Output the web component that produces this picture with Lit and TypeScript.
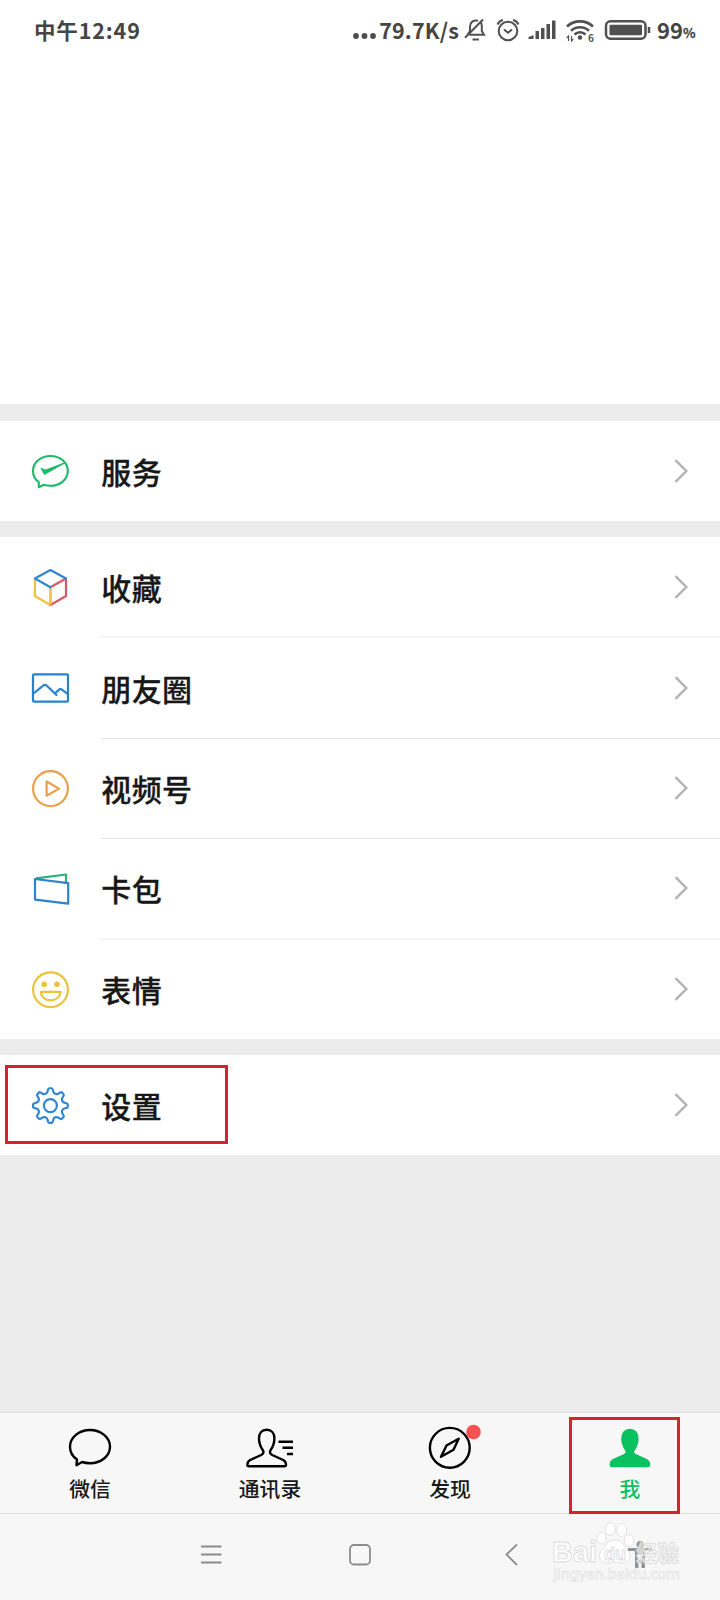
import { LitElement, html, css, svg } from "lit";
import { customElement, property } from "lit/decorators.js";

// Eight rounded teeth around a ring, joined by concave valleys.
function gearPath(): string {
  const at = (deg: number, r: number) => {
    const t = (deg * Math.PI) / 180;
    return `${(20.4 + r * Math.sin(t)).toFixed(2)} ${(20.6 - r * Math.cos(t)).toFixed(2)}`;
  };
  let d = `M${at(-12, 14.2)}`;
  for (let i = 0; i < 8; i++) {
    const a = i * 45;
    d += `L${at(a - 8.5, 16.2)}Q${at(a - 7, 17.4)} ${at(a - 4, 17.4)}L${at(a + 4, 17.4)}Q${at(a + 7, 17.4)} ${at(a + 8.5, 16.2)}L${at(a + 12, 14.2)}A3.3 3.3 0 0 0 ${at(a + 33, 14.2)}`;
  }
  return d + "z";
}

const icons: Record<string, unknown> = {
  service: svg`<g fill="none" stroke="#1aba69" stroke-width="2.100" stroke-linejoin="round" stroke-linecap="round"><path d="M8.800 31.200C5 28.500 3 24.500 3 20C3 11.500 10.700 5 20.400 5S37.800 11.500 37.800 20S30 34.800 20.400 34.800C18 34.800 15.800 34.500 13.700 33.800L8.800 36.200z"/><path d="M11.200 17.500L14.500 23.400 35.500 11.500 15.700 19z" fill="#1aba69" stroke-width="1"/></g>`,
  fav: svg`<g fill="none" stroke-width="2.200" stroke-linejoin="round" stroke-linecap="round"><path d="M4.900 12v17L20.400 38V20.500" stroke="#f2c13f"/><path d="M20.400 38L36 29V11.500L20.400 20.300" stroke="#e05562"/><path d="M20.400 20.500v17" stroke="#f2c13f"/><path d="M20.400 20.300L4.900 11.500 20.400 3 36 11.500" stroke="#2f86d2"/></g>`,
  moments: svg`<g fill="none" stroke="#2782d0" stroke-width="2.200" stroke-linejoin="round" stroke-linecap="round"><rect x="3" y="6.400" width="35" height="27.300" rx="1"/><path d="M4 25L13.500 17.300Q14.900 16.300 16.300 17.300L26.500 27M25.500 24.800L29.500 21.300Q30.500 20.500 31.500 21.300L37.300 25.700"/></g>`,
  channels: svg`<g fill="none" stroke="#e9a04a" stroke-width="2.200" stroke-linejoin="round"><circle cx="20.500" cy="20.600" r="17.400"/><path d="M16.600 13.500V27.700L29 20.600z"/></g>`,
  cards: svg`<g fill="none" stroke-width="2.200" stroke-linejoin="round"><path d="M6 10.300L36 6.500V14" stroke="#2ab27a"/><path d="M5 11L38.200 15.200V35.700L5 31.600z" stroke="#2c83cf"/></g>`,
  emoji: svg`<g fill="none" stroke="#ecc23a" stroke-width="2.200" stroke-linejoin="round"><circle cx="20.500" cy="20.700" r="17.400"/><circle cx="14.200" cy="15.300" r="2.800" fill="#ecc23a" stroke="none"/><circle cx="27" cy="15.300" r="2.800" fill="#ecc23a" stroke="none"/><path d="M10.800 22.800H30.500C30 28 26 31.300 20.600 31.300S11.200 28 10.800 22.800z"/></g>`,
  settings: svg`<g fill="none" stroke="#2f86d2" stroke-width="2.200" stroke-linejoin="round"><circle cx="20.400" cy="20.600" r="6.500"/><path d="${gearPath()}"/></g>`,
};

@customElement("menu-row")
class MenuRow extends LitElement {
  @property() icon = "";
  @property() label = "";
  @property({ type: Boolean }) marked = false;
  static styles = css`
    :host { display: flex; align-items: center; height: 100%; position: relative; background: #fff; }
    .icon { width: 40px; height: 40px; margin-left: 30px; flex: none; }
    .body { flex: 1; align-self: stretch; margin-left: 31.3px; display: flex; align-items: center; justify-content: space-between; }
    .label { font-size: 30px; line-height: 40px; font-weight: 500; color: #181818; letter-spacing: 0.4px; -webkit-text-stroke: 0.3px #181818; }
    .chev { width: 14px; height: 26px; margin-right: 32px; }
    .mark { position: absolute; left: 5px; top: 10px; width: 217px; height: 73px; border: 3px solid #d3232e; }
  `;
  render() {
    return html`<svg class="icon" viewBox="0 0 40 40">${icons[this.icon]}</svg>
      <div class="body"><span class="label">${this.label}</span>
        <svg class="chev" viewBox="0 0 14 26"><path d="M1.500 2.200L12.300 13 1.500 23.800" fill="none" stroke="#b2b2b2" stroke-width="2.400"/></svg>
      </div>${this.marked ? html`<div class="mark"></div>` : ""}`;
  }
}

@customElement("status-bar")
class StatusBar extends LitElement {
  static styles = css`
    :host { display: flex; align-items: center; height: 60px; padding: 0 24.5px 0 34px; color: #454545; font-weight: 700; }
    .time { font-size: 21.5px; flex: 1; letter-spacing: 0.85px; margin-top: -2px; }
    .speed { font-size: 21.5px; letter-spacing: 0.15px; margin-top: -2px; }
    .icons { width: 198px; height: 60px; flex: none; }
    .bat { font-size: 22px; margin-top: -2px; }
    .pct { font-size: 13px; margin-top: 5px; -webkit-text-stroke: 0.3px #454545; }
    .dots { width: 26px; height: 60px; }
    .small { font-size: 10px; }
  `;
  render() {
    return html`<span class="time">中午12:49</span>
      <svg class="dots" viewBox="0 0 26 60" fill="#4d4d4d"><circle cx="3" cy="36" r="2.900"/><circle cx="11.500" cy="36" r="2.900"/><circle cx="20" cy="36" r="2.900"/></svg>
      <span class="speed">79.7K/s</span>
      <svg class="icons" viewBox="459.500 0 198 60" fill="none" stroke="#505050" stroke-width="2">
        <path d="M470 34.800H484.500L482.300 31V26C482.300 24 481.800 22.800 480.800 21.800M478.500 20.800C474 19.500 470.500 22.500 470.500 26.500V31L468 34.800M465.500 37.800L483.500 19.500"/><path d="M473 39.500h6.500"/>
        <circle cx="508.500" cy="31" r="9.300"/><path d="M504.500 29.500l4 3.300 4-3.300M498 24.500q1.500-3.500 5.500-4.500M519 24.500q-1.500-3.500-5.500-4.500"/>
        <g fill="#505050" stroke="none"><path d="M529 39v-2l5-2v4zM536 31h3.500v8H536zM541.500 28h3.500v11h-3.500zM547 24h3.500v15H547zM552.500 20.500h3.500V39h-3.500z"/><circle cx="580.500" cy="37.500" r="2.300"/></g>
        <path d="M567.500 26.500A19 19 0 0 1 593.500 26.500M571.500 30.800A13 13 0 0 1 589.500 30.800M575 34.500A8 8 0 0 1 586 34.500" stroke-width="2.600"/>
        <path d="M569 41v-5l-1.800 1.800M572 36v5l1.800-1.800" stroke-width="1.200"/>
        <text class="small" x="588.500" y="41.500" fill="#505050" stroke="none">6</text>
        <rect x="606.500" y="21.200" width="39.500" height="17.600" rx="4.500" stroke-width="2.500"/><rect x="610" y="24.800" width="32.500" height="10.400" rx="1" fill="#505050" stroke="none"/><path d="M649.500 27v6" stroke-width="2.500"/>
      </svg><span class="bat">99</span><span class="pct">%</span>`;
  }
}

const person = "M0 0C-5 0-7.700 3.500-7.700 8.500C-7.700 13.500-6.300 17-3.900 20.300C-2.700 22.300-3.200 24-5.500 25.200L-16.500 30.200C-19 31.400-19.300 33-19.300 35Q-19.300 36.500-17.800 36.500H17.800Q19.300 36.500 19.300 35C19.300 33 19 31.400 16.500 30.200L5.500 25.200C3.200 24 2.700 22.300 3.900 20.300C6.300 17 7.700 13.500 7.700 8.500C7.700 3.500 5 0 0 0z";

@customElement("tab-bar")
class TabBar extends LitElement {
  static styles = css`
    :host { display: grid; flex: none; grid-template-columns: repeat(4, 180px); height: 100px; border-top: 1px solid #dedede; background: #f7f7f7; }
    .tab { position: relative; display: flex; flex-direction: column; align-items: center; color: #181818; }
    .tab svg { width: 70px; height: 50px; margin-top: 10px; overflow: visible; }
    .name { font-size: 20.8px; line-height: 28px; font-weight: 500; margin-top: 1px; }
    .active { color: #0ac160; }
    .mark { position: absolute; left: 29px; top: 4px; width: 105px; height: 91px; border: 3px solid #d3232e; }
  `;
  render() {
    return html`
      <div class="tab"><svg viewBox="55 1423 70 50" fill="none" stroke="#000" stroke-width="2.400" stroke-linejoin="round"><path d="M77 1459.500C72.500 1456.500 70 1452 70 1446.800C70 1437.500 79 1430 90 1430S110 1437.500 110 1446.800S101 1463.200 90 1463.200C87 1463.200 84.500 1462.800 82 1462L76.500 1465.200z"/></svg><span class="name">微信</span></div>
      <div class="tab"><svg viewBox="235 1423 70 50" fill="none" stroke="#000" stroke-width="2.400" stroke-linejoin="round"><path transform="translate(266.700 1429.800)" d="${person}"/><path d="M278.500 1441.700H293M282.500 1447.800H293M287 1454H293"/></svg><span class="name">通讯录</span></div>
      <div class="tab"><svg viewBox="415 1423 70 50" fill="none" stroke="#000" stroke-width="2.400" stroke-linejoin="round"><circle cx="449.800" cy="1447.800" r="19.900"/><path d="M458.700 1438.700L453.500 1449.800 441 1456.800 446.500 1445.500z"/><circle cx="473.500" cy="1432" r="7.300" fill="#fa5252" stroke="none"/></svg><span class="name">发现</span></div>
      <div class="tab active"><svg viewBox="595 1423 70 50" stroke-linejoin="round"><path transform="translate(629.900 1429.800)" d="${person}" fill="#0ac160" stroke="#0ac160" stroke-width="2"/></svg><span class="name">我</span><div class="mark"></div></div>`;
  }
}

@customElement("nav-bar")
class NavBar extends LitElement {
  static styles = css`
    :host { display: block; flex: none; height: 86px; border-top: 1px solid #dedede; background: #f7f7f7; }
    svg { display: block; width: 720px; height: 86px; }
    .wm { font-weight: 700; font-family: "Liberation Sans", "Noto Sans CJK SC", sans-serif; }
    .url { font-family: "Noto Sans", sans-serif; font-weight: 500; }
  `;
  render() {
    return html`<svg viewBox="0 1514 720 86" fill="none" stroke="#8c8c8c" stroke-width="1.800">
      <path d="M201 1546.500h20.500M201 1554.500h20.500M201 1562.500h20.500"/>
      <rect x="350" y="1545" width="20" height="19.500" rx="4"/>
      <path d="M517 1544.500L506.500 1554.500 517 1565"/>
      <g fill="#929292" stroke="none"><circle cx="640" cy="1544.500" r="3.500"/><path fill-rule="evenodd" d="M628 1548H652V1551H645V1568H641.500V1562.500H638.500V1568H635V1551H628zM638 1555V1559.500H642V1555z"/></g>
      <g fill="#fff" stroke="#dcdcdc" stroke-width=".9">
        <ellipse cx="601.500" cy="1538" rx="4.800" ry="6"/><ellipse cx="610.300" cy="1529" rx="4.900" ry="6.500"/><ellipse cx="621.700" cy="1530" rx="4.900" ry="6.500"/><ellipse cx="629" cy="1540.500" rx="4.800" ry="6"/>
        <path d="M615 1540C607 1540 606 1546 602 1550C597 1555 600 1563 607 1563C611 1563 612 1562 615 1562S620 1563 623 1563C630 1563 632 1556 628 1551C624 1546 623 1540 615 1540z"/>
        <text class="wm" x="552" y="1562" font-size="29.500" textLength="45" lengthAdjust="spacingAndGlyphs">Bai</text><text class="wm" x="604" y="1560" font-size="18" textLength="22">du</text>
        <text class="wm" x="636" y="1560.500" font-size="21.500" textLength="43" fill-opacity=".6">经验</text>
        <text class="url" x="553" y="1579" font-size="14.500" textLength="127" stroke-width=".6">jingyan.baidu.com</text>
      </g></svg>`;
  }
}

@customElement("app-root")
class AppRoot extends LitElement {
  static styles = css`
    :host { display: flex; flex-direction: column; width: 720px; height: 1600px; overflow: hidden; background: #ececec; font-family: "Noto Sans CJK SC", sans-serif; }
    .top { flex: none; background: #fff; height: 404px; }
    .group { flex: none; margin-top: 16px; background: #fff; }
    .top + .group { margin-top: 17px; }
    .row { height: 100px; }
    .list .row { position: relative; height: 100.4px; }
    .list .row + .row::before { content: ""; position: absolute; z-index: 1; left: 101px; right: 0; top: 0; height: 1px; background: #e6e6e6; }
    .list .row:nth-child(2)::before, .list .row:nth-child(5)::before { top: -1px; height: 2px; background: #f4f4f4; }
    .spacer { flex: none; height: 257px; }
  `;
  render() {
    const list = [["fav", "收藏"], ["moments", "朋友圈"], ["channels", "视频号"], ["cards", "卡包"], ["emoji", "表情"]];
    return html`<div class="top"><status-bar></status-bar></div>
      <div class="group"><div class="row"><menu-row icon="service" label="服务"></menu-row></div></div>
      <div class="group list">${list.map(([i, l]) => html`<div class="row"><menu-row icon=${i} label=${l}></menu-row></div>`)}</div>
      <div class="group"><div class="row"><menu-row icon="settings" label="设置" marked></menu-row></div></div>
      <div class="spacer"></div><tab-bar></tab-bar><nav-bar></nav-bar>`;
  }
}
